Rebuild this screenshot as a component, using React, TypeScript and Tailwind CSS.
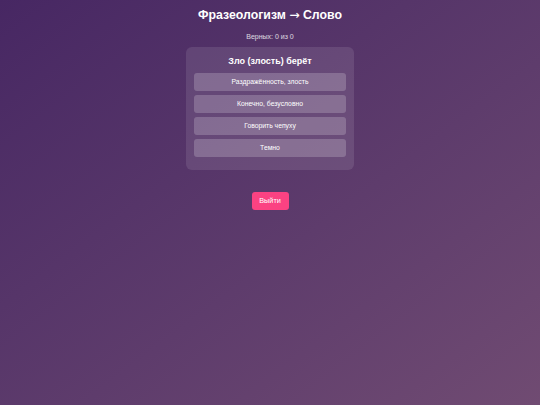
export default function App() {
  const options = [
    "Раздражённость, злость",
    "Конечно, безусловно",
    "Говорить чепуху",
    "Темно",
  ];

  return (
    <div
      className="flex min-h-[405px] w-full flex-col items-center bg-gradient-to-br from-[#472763] to-[#704b72] text-white"
      style={{ fontFamily: '"Liberation Sans", Arial, sans-serif' }}
    >
      <h1 className="mt-[7px] text-[12.3px] font-bold leading-[16px]">
        Фразеологизм{" "}
        <span className="font-normal" style={{ fontFamily: '"DejaVu Sans", sans-serif' }}>
          →
        </span>{" "}
        Слово
      </h1>
      <p className="mt-[9px] text-[7px] leading-[9px] text-white/80">
        Верных: 0 из 0
      </p>

      <div className="mt-[6px] flex w-[168px] flex-col rounded-[6px] bg-white/10 px-[8px] pb-[13px] pt-[9px]">
        <h2 className="text-center text-[9px] font-bold leading-[11px]">
          Зло (злость) берёт
        </h2>
        <div className="mt-[6px] flex flex-col gap-[4px]">
          {options.map((o) => (
            <button
              key={o}
              className="h-[18px] rounded-[3px] bg-white/20 text-center text-[6.8px] text-white"
            >
              {o}
            </button>
          ))}
        </div>
      </div>

      <button className="mt-[22px] h-[18px] w-[37px] rounded-[3px] bg-[#fb4282] text-[7.3px] text-white">
        Выйти
      </button>
    </div>
  );
}
